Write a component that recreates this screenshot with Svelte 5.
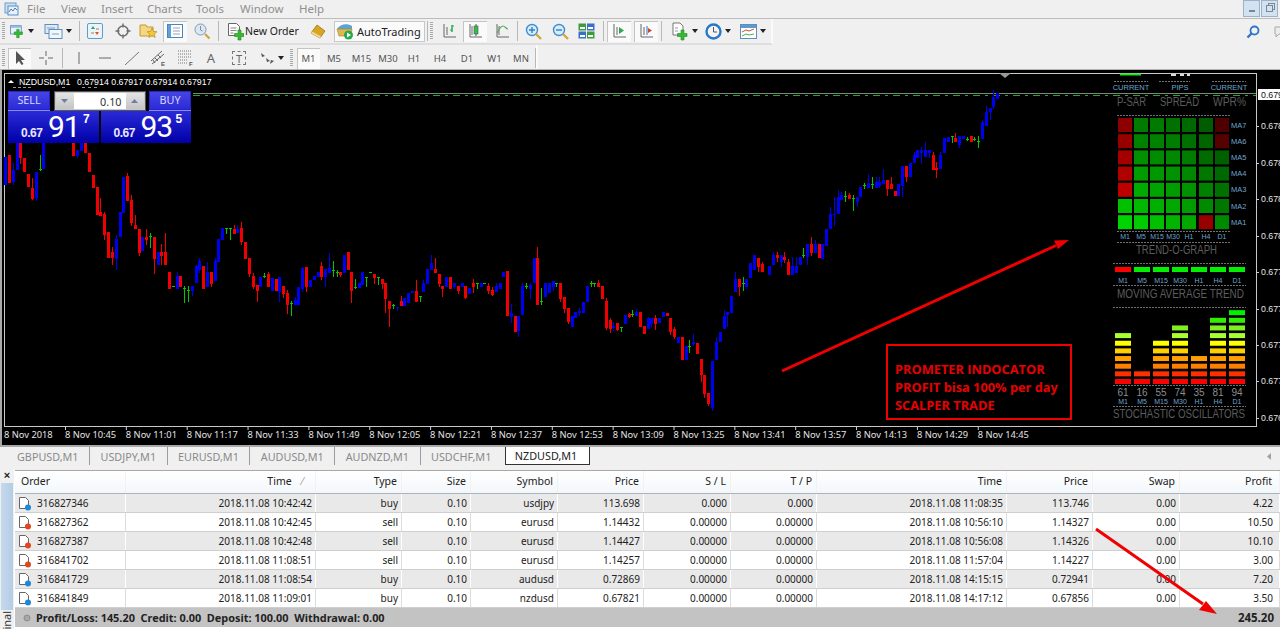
<script>
  const menu = [['File', 27], ['View', 61], ['Insert', 101], ['Charts', 147], ['Tools', 196], ['Window', 240], ['Help', 299]]
  const tabs = ['GBPUSD,M1', 'USDJPY,M1', 'EURUSD,M1', 'AUDUSD,M1', 'AUDNZD,M1', 'USDCHF,M1', 'NZDUSD,M1']
  const periods = ['M1', 'M5', 'M15', 'M30', 'H1', 'H4', 'D1', 'W1', 'MN']
  const periodWidths = [23, 28, 27, 26, 26, 26, 28, 27, 26]

  const times = ['10:45', '11:01', '11:17', '11:33', '11:49', '12:05', '12:21', '12:37', '12:53', '13:09', '13:25', '13:41', '13:57', '14:13', '14:29', '14:45']
  const prices = [[126, '0.678'], [163, '0.678'], [199, '0.678'], [236, '0.678'], [272, '0.677'], [309, '0.677'], [345, '0.677'], [381, '0.677'], [418, '0.676']]

  const columns = [
    { name: 'Order', w: 111 }, { name: 'Time', w: 190 }, { name: 'Type', w: 86 }, { name: 'Size', w: 69 },
    { name: 'Symbol', w: 87 }, { name: 'Price', w: 86 }, { name: 'S / L', w: 87 }, { name: 'T / P', w: 86 },
    { name: 'Time', w: 190 }, { name: 'Price', w: 86 }, { name: 'Swap', w: 87 }, { name: 'Profit', w: 100 }
  ]
  const gridCols = columns.map((c) => c.w + 'px').join(' ')

  const trades = [
    ['316827346', '2018.11.08 10:42:42', 'buy', '0.10', 'usdjpy', '113.698', '0.000', '0.000', '2018.11.08 11:08:35', '113.746', '0.00', '4.22'],
    ['316827362', '2018.11.08 10:42:45', 'sell', '0.10', 'eurusd', '1.14432', '0.00000', '0.00000', '2018.11.08 10:56:10', '1.14327', '0.00', '10.50'],
    ['316827387', '2018.11.08 10:42:48', 'sell', '0.10', 'eurusd', '1.14427', '0.00000', '0.00000', '2018.11.08 10:56:08', '1.14326', '0.00', '10.10'],
    ['316841702', '2018.11.08 11:08:51', 'sell', '0.10', 'eurusd', '1.14257', '0.00000', '0.00000', '2018.11.08 11:57:04', '1.14227', '0.00', '3.00'],
    ['316841729', '2018.11.08 11:08:54', 'buy', '0.10', 'audusd', '0.72869', '0.00000', '0.00000', '2018.11.08 14:15:15', '0.72941', '0.00', '7.20'],
    ['316841849', '2018.11.08 11:09:01', 'buy', '0.10', 'nzdusd', '0.67821', '0.00000', '0.00000', '2018.11.08 14:17:12', '0.67856', '0.00', '3.50']
  ]

  const COLORS = { b: '#0000f0', r: '#f00000', g: '#00c800' }

  // x, colour, body top, body bottom, wick top, wick bottom
  const candles = [
    [5,'b',157,185],[9,'r',155,183],[13,'b',170,182,163,185],[17,'b',140,170],[20,'r',140,158,140,164],[24,'r',158,172],[28,'r',174,187],
    [32,'r',188,199,178,200],[36,'b',172,198,172,201],[40,'g',169,170,155,171],[43,'b',140,169],
    [73,'r',140,156],[77,'b',150,156,150,158],[81,'b',140,151],[85,'r',140,153],[89,'r',153,172],[93,'r',175,188],[97,'r',187,215],[100,'r',212,216,198,216],
    [104,'r',214,235,212,240],[108,'r',232,258],[112,'r',252,258,247,265],[116,'b',239,259,235,270],[120,'b',212,237],[123,'b',177,213],[127,'r',176,201,173,201],
    [131,'r',200,223,195,226],[135,'r',225,229,215,229],[139,'r',229,253,229,256],[142,'b',237,251],[146,'r',237,240,229,245],[150,'g',236,237,233,248],
    [154,'r',237,259,237,274],[158,'b',252,265],[161,'r',252,256,244,265],[165,'r',252,265,233,265],[169,'r',272,289],[173,'g',286,287],[177,'b',276,289,272,289],
    [180,'r',276,287],[184,'g',288,289,286,303],[188,'g',290,291,286,302],[192,'b',286,291,286,296],[196,'b',266,283,265,283],[199,'b',261,270,258,273],[203,'r',266,289],
    [207,'b',272,287,262,287],[211,'r',272,284,272,287],[215,'b',261,281,258,281],[218,'b',239,262],[222,'b',228,240],[226,'g',228,229,228,234],[230,'g',228,229,228,240],
    [234,'r',229,234,225,234],[237,'b',229,233,225,233],[241,'r',228,242,222,245],[245,'r',242,259],[249,'r',258,274,258,277],[253,'r',276,287,273,289],[257,'r',285,291,285,302],
    [260,'b',277,287],[264,'g',276,277,273,278],[268,'r',274,287,272,287],[272,'b',278,291],[276,'r',279,291],[279,'b',277,292,277,302],[283,'r',286,294,286,298],
    [287,'r',293,305,290,314],[291,'g',303,304,301,316],[295,'b',300,305,297,305],[298,'b',287,305],[302,'b',268,289,267,292],[306,'r',267,287,267,292],[310,'b',280,287],
    [314,'b',276,280],[318,'b',272,277],[321,'r',266,277,262,280],[325,'b',269,277,269,287],[329,'b',268,273,253,273],[333,'g',270,271,261,277],[337,'g',272,273,270,277],
    [340,'r',272,275,272,277],[344,'b',255,273],[348,'r',252,270],
    [351,'r',272,291,272,303],[355,'g',287,288,279,289],[359,'b',283,288],[362,'b',272,285],[366,'g',277,278,277,287],[370,'g',272,273],[374,'r',274,278,274,284],
    [378,'g',277,278,277,285],[382,'r',279,284,279,289],[385,'r',283,299,283,313],[389,'r',301,309,301,327],[393,'g',305,306,304,309],[397,'b',307,308,307,311],
    [401,'r',301,306,296,306],[404,'b',298,306],[408,'b',293,303],[412,'b',291,293],[416,'r',291,302,280,302],[420,'g',296,297,296,302],[423,'b',283,292,280,292],
    [427,'b',269,284],[431,'b',263,270,255,270],[435,'r',269,273,258,273],[439,'r',274,284,274,287],[442,'r',286,289,286,297],[446,'b',277,287],[450,'r',277,289],
    [454,'b',283,287,283,289],[458,'r',286,291,286,294],[462,'b',283,287],[465,'r',286,298,286,299],[469,'b',288,294],[473,'r',283,287,279,293],[477,'g',283,284,283,289],
    [481,'b',283,287],[484,'g',283,284],[488,'r',286,291,283,294],[492,'r',290,295,287,296],[496,'b',286,292,283,292],[500,'b',283,289],[503,'b',272,277],[507,'r',271,316],
    [511,'b',313,317,304,323],[515,'r',316,332],[518,'b',316,331,316,337],[522,'b',286,315,283,315],[526,'g',286,287,283,289],[530,'b',285,289,283,299],[534,'b',258,283],
    [537,'r',258,305,247,305],[541,'g',301,302,288,305],[545,'b',283,297],[549,'b',283,293],[553,'b',281,287,281,291],[556,'g',283,284,283,287],[560,'r',283,299,283,302],
    [564,'r',297,309,297,313],[568,'r',308,322,308,324],[572,'b',316,327],[575,'b',312,318],[579,'b',311,313,308,316],[583,'b',302,313],[587,'b',286,302],[591,'g',283,284,281,287],
    [594,'g',283,284,283,287],[598,'r',283,287,280,287],[602,'r',286,299],[606,'r',301,328,298,330],[610,'r',320,329,318,333],[613,'b',326,328,322,331],[617,'r',323,330,323,331],
    [621,'g',327,328,327,332],[625,'b',315,324],[629,'r',314,317,313,318],[632,'g',314,316,310,317],[636,'b',312,316,309,316],[640,'r',312,327],[644,'r',326,334],[648,'b',318,329,317,329],
    [651,'b',318,324,318,328],[655,'r',318,324,315,330],[659,'b',318,323],[663,'b',312,317],[667,'r',313,316],[670,'r',318,332,318,335],[674,'r',329,337,327,339],[678,'b',337,343],
    [682,'r',337,360],[686,'b',346,360],[689,'g',346,347,340,353],[693,'b',342,344,334,346],[697,'r',343,354],[701,'r',359,375,359,382],[704,'r',375,394,375,398],[708,'r',393,404,393,406],
    [712,'b',361,408,361,411],[716,'b',342,360,337,360],[720,'b',332,342],[724,'b',316,329,310,329],[727,'b',312,315,312,327],[731,'b',296,313],[735,'b',279,292,272,292],
    [739,'r',279,287,279,296],[743,'g',283,284,277,291],[746,'b',279,287,279,289],[750,'b',263,278],
    [754,'b',255,270],[758,'r',258,267,258,272],[762,'r',264,272,262,272],[769,'b',266,275],[773,'b',255,265,252,265],[777,'r',255,258,252,262],[781,'b',255,262,255,267],
    [784,'r',257,260,252,263],[788,'r',262,275,259,275],[792,'b',266,275,257,275],[796,'b',266,273,257,273],[800,'b',257,265],[803,'g',255,256,248,258],[807,'b',244,257,244,265],
    [811,'r',244,253,237,256],[815,'b',244,253,240,253],[819,'r',244,258],[822,'b',244,259],[826,'b',229,246],[830,'b',214,229,207,229],[834,'b',214,215,197,226],[838,'b',197,214,190,214],
    [841,'b',195,200,192,200],[845,'g',196,197,191,202],[849,'r',195,199,193,199],[853,'g',198,199,195,211],[857,'b',197,202,197,207],[860,'b',187,197],[864,'g',185,186,183,189],
    [868,'b',183,188,174,188],[872,'g',184,185,177,189],[876,'b',182,188,177,188],[879,'b',182,186,177,188],[883,'b',180,184,169,184],[887,'r',180,189,180,196],[891,'r',184,189,177,189],
    [895,'r',191,196],[898,'b',184,196],[902,'b',166,186,166,197],[906,'r',166,177,166,182],[910,'b',163,177],[914,'b',155,163,152,163],[917,'b',150,158],[921,'b',150,153,147,164],
    [925,'b',150,157,142,157],[929,'b',150,153,150,158],[933,'r',155,170,152,170],[936,'r',168,170,162,178],[940,'b',155,169,152,169],[944,'b',138,153],[948,'b',137,142],[952,'g',136,137,136,143],
    [955,'r',138,142,133,142],[959,'b',136,145,136,148],[963,'b',136,139],[967,'g',139,140,137,141],[971,'r',136,142],[974,'g',139,140,137,141],[978,'g',141,142,136,148],
    [982,'b',122,139,120,139],[986,'b',112,126,106,126],[990,'b',108,112,108,120],[993,'b',97,107,90,109],[997,'b',93,99]
  ]

  // trend grid, rows MA7..MA1, columns M1..D1
  const trendGrid = [
    ['#8e0000', '#007a00', '#007a00', '#007000', '#006800', '#005c00', '#4e0000'],
    ['#980000', '#008200', '#008200', '#007c00', '#007000', '#006400', '#560000'],
    ['#a40000', '#009000', '#008c00', '#008800', '#007c00', '#006c00', '#006000'],
    ['#b00000', '#009c00', '#009800', '#009200', '#008800', '#007800', '#006800'],
    ['#bc0000', '#00aa00', '#00a400', '#009c00', '#009200', '#008200', '#007000'],
    ['#00c000', '#00b800', '#00b000', '#00a800', '#009c00', '#008a00', '#007800'],
    ['#00d400', '#00cc00', '#00c000', '#00b400', '#00a800', '#980000', '#008800']
  ]
  const maLabels = ['MA7', 'MA6', 'MA5', 'MA4', 'MA3', 'MA2', 'MA1']
  const tf = ['M1', 'M5', 'M15', 'M30', 'H1', 'H4', 'D1']
  const gridX = [1118, 1134, 1150, 1166, 1182, 1199, 1215]
  const barX = [1115, 1134, 1153, 1172, 1191, 1210, 1229]
  const maTrend = ['#ff0000', '#00f000', '#00f000', '#00f000', '#00f000', '#00f000', '#00f000']
  const stochColors = ['#ff0000', '#ff3000', '#ff8000', '#ffa000', '#ffd000', '#ffff00', '#aaff30', '#80f020', '#30f000', '#00f000']
  const stoch = [[61, 7], [16, 2], [55, 6], [74, 8], [35, 4], [81, 9], [94, 10]]
  const dashes = [
    [1114, 1148, 81], [1159, 1190, 81], [1212, 1246, 81], [1117, 1230, 115], [1117, 1230, 231], [1117, 1230, 242],
    [1113, 1246, 263], [1113, 1246, 285], [1113, 1246, 307], [1113, 1246, 385], [1113, 1246, 406]
  ]
  // label, left edge, width, baseline
  const captions = [
    ['P-SAR', 1117, 29, 106], ['SPREAD', 1160, 39, 106], ['WPR%', 1213, 33, 106], ['TREND-O-GRAPH', 1136, 81, 254],
    ['MOVING AVERAGE TREND', 1117, 127, 298], ['STOCHASTIC OSCILLATORS', 1113, 132, 418]
  ]
</script>

<div class="app">
  <nav class="menu">
    <svg class="appicon" width="15" height="15" viewBox="0 0 15 15">
      <rect x="1" y="2" width="11" height="10" fill="#cfe0f2" stroke="#6f9cc9" />
      <rect x="4" y="5" width="10" height="9" fill="#e6f0fa" stroke="#5a8fc4" />
      <path d="M5 11l2-3 2 2 2-3 2 2" fill="none" stroke="#4a7db5" />
    </svg>
    {#each menu as [label, x]}
      <span class="menuitem" style="left:{x}px">{label}</span>
    {/each}
    <div class="winbtns">
      <span class="winbtn"><i class="min"></i></span>
      <span class="winbtn"><i class="rest"></i></span>
    </div>
  </nav>

  <div class="toolbar row1">
    <div class="tools">
      <span class="grip"></span>
      <span class="tool" style="width:24px">
        <svg width="18" height="17" viewBox="0 0 18 17"><rect x=".5" y="1.5" width="13" height="10" fill="#e8f1fb" stroke="#5e8ebe" /><rect x="1" y="2" width="12" height="2" fill="#8fb8de" /><path d="M8 6v3H5v3h3v4h3v-4h4V9h-4V6z" fill="#35b935" stroke="#1f8a1f" stroke-width=".6" /></svg>
        <b class="caret"></b>
      </span>
      <span class="tool" style="width:32px;margin-left:8px">
        <svg width="19" height="17" viewBox="0 0 19 17"><rect x="1" y="1.5" width="13" height="9" fill="#dfeaf7" stroke="#5e8ebe" /><rect x="5" y="6.5" width="13" height="9" fill="#f2f7fc" stroke="#5e8ebe" /><path d="M3 5h8M8 11h7" stroke="#7aa0c8" /></svg>
        <b class="caret"></b>
      </span>
      <span class="sep" style="margin:0 7px 0 5px"></span>
      <span class="tool" style="width:16px">
        <svg width="16" height="16" viewBox="0 0 16 16"><rect x=".5" y=".5" width="15" height="15" rx="1.5" fill="#eaf4fb" stroke="#5b9ec9" /><path d="M4 6l2-3 2 3z" fill="#2fa84f" /><path d="M8 9l2 3 2-3z" fill="#d9572b" /><path d="M4 10h3M9 6h3" stroke="#c97b2b" /></svg>
      </span>
      <span class="tool" style="width:16px;margin-left:12px">
        <svg width="16" height="16" viewBox="0 0 16 16"><circle cx="8" cy="8" r="5" fill="none" stroke="#6e6e6e" stroke-width="1.6" /><path d="M8 .5v4M8 11.5v4M.5 8h4M11.5 8h4" stroke="#6e6e6e" stroke-width="1.4" /></svg>
      </span>
      <span class="tool" style="width:19px;margin-left:8px">
        <svg width="19" height="18" viewBox="0 0 19 18"><path d="M1 3h6l1 2h6v9H1z" fill="#f4d77f" stroke="#c09a3a" /><path d="M13 6l1.5 3.4 3.5.3-2.7 2.3.9 3.5-3.2-1.900-3.2 1.900.9-3.500-2.700-2.300 3.500-.3z" fill="#f2c83a" stroke="#b98f20" stroke-width=".7" /></svg>
      </span>
      <span class="tool pressed" style="width:24px;margin-left:5px">
        <svg width="16" height="14" viewBox="0 0 16 14"><rect x=".5" y=".5" width="15" height="13" fill="#fff" stroke="#4a86bd" /><rect x="1" y="1" width="3" height="12" fill="#5fa2d8" /><path d="M6 4h7M6 7h7M6 10h7" stroke="#8fa8c0" /></svg>
      </span>
      <span class="tool" style="width:18px;margin-left:6px">
        <svg width="18" height="18" viewBox="0 0 18 18"><circle cx="7.5" cy="7.5" r="5.5" fill="#dbe7f3" stroke="#8499b0" /><path d="M7.5 4v4l2 1" fill="none" stroke="#7a8ea5" /><path d="M12 12l4.500 4.500" stroke="#c9a23b" stroke-width="2" /></svg>
      </span>
      <span class="sep" style="margin:0 8px 0 7px"></span>
      <span class="tool" style="width:17px">
        <svg width="17" height="19" viewBox="0 0 17 19"><path d="M1.500 1.500h8l3 3v9h-11z" fill="#fff" stroke="#666" /><path d="M3.500 6h6M3.500 8.500h6M3.500 11h3" stroke="#888" /><path d="M11 8v3.500H7.500v3H11V18h3v-3.500h3v-3h-3V8z" fill="#35b935" stroke="#1f8a1f" stroke-width=".6" /></svg>
      </span>
      <span class="textbtn" style="width:54px;margin-left:1px">New Order</span>
      <span class="tool" style="width:16px;margin-left:11px">
        <svg width="16" height="15" viewBox="0 0 16 15"><path d="M1 9l6-8 8 6-5 7z" fill="#d9a520" stroke="#8f6a14" stroke-width=".7" /><path d="M1 9l9 5 1-1.500-9-5z" fill="#f1dda0" /></svg>
      </span>
      <span class="autotrading">
        <svg width="18" height="18" viewBox="0 0 18 18"><path d="M1 7c3-5 10-6 15-3v3H1z" fill="#56a5d6" /><path d="M1 7h15l-1 7H3z" fill="#e3b64a" stroke="#a5812c" stroke-width=".6" /><circle cx="12.5" cy="13" r="4.500" fill="#27a84a" /><path d="M11 10.500l4 2.500-4 2.500z" fill="#fff" /></svg>
        <span>AutoTrading</span>
      </span>
      <span class="sep" style="margin:0 2px"></span>
      <span class="grip" style="margin:0 9px 0 0"></span>
      <span class="tool" style="width:14px">
        <svg width="14" height="16" viewBox="0 0 14 16"><path d="M2 1v13h12M5 4v8" fill="none" stroke="#666" /><path d="M10 2v7" stroke="#2fa84f" stroke-width="1.500" /><path d="M8 7h2M10 3h2" stroke="#2fa84f" /></svg>
      </span>
      <span class="tool pressed" style="width:24px;margin-left:7px">
        <svg width="14" height="16" viewBox="0 0 14 16"><path d="M2 1v13h12M4 3v9" fill="none" stroke="#666" /><rect x="6" y="3" width="4" height="8" fill="#2fbd4f" stroke="#555" stroke-width=".6" /><path d="M8 1v2M8 11v2" stroke="#555" /></svg>
      </span>
      <span class="tool" style="width:14px;margin-left:8px">
        <svg width="14" height="16" viewBox="0 0 14 16"><path d="M2 1v13h12M4 3v9" fill="none" stroke="#666" /><path d="M2 10c2-4 4-7 6-7s3 3 5 3" fill="none" stroke="#4caf50" stroke-width="1.100" /></svg>
      </span>
      <span class="sep" style="margin:0 7px 0 8px"></span>
      <span class="tool" style="width:17px">
        <svg width="17" height="17" viewBox="0 0 17 17"><circle cx="7" cy="7" r="5.500" fill="#d8ecfb" stroke="#3f8ed0" stroke-width="1.400" /><path d="M4 7h6M7 4v6" stroke="#2f7fc4" stroke-width="1.400" /><path d="M11 11l5 5" stroke="#d1a93b" stroke-width="2.400" /></svg>
      </span>
      <span class="tool" style="width:17px;margin-left:10px">
        <svg width="17" height="17" viewBox="0 0 17 17"><circle cx="7" cy="7" r="5.500" fill="#d8ecfb" stroke="#3f8ed0" stroke-width="1.400" /><path d="M4 7h6" stroke="#2f7fc4" stroke-width="1.400" /><path d="M11 11l5 5" stroke="#d1a93b" stroke-width="2.400" /></svg>
      </span>
      <span class="tool" style="width:17px;margin-left:9px">
        <svg width="17" height="16" viewBox="0 0 17 16"><rect x=".5" y=".5" width="7.500" height="7" fill="#3d9a3d" /><rect x="9" y=".5" width="7.500" height="7" fill="#3a6fc9" /><rect x=".5" y="8.500" width="7.500" height="7" fill="#3a6fc9" /><rect x="9" y="8.500" width="7.500" height="7" fill="#3d9a3d" /><path d="M2 5h5M10 5h5M2 13h5M10 13h5" stroke="#fff" stroke-width="2" /></svg>
      </span>
      <span class="sep" style="margin:0 3px 0 8px"></span>
      <span class="tool pressed" style="width:24px">
        <svg width="14" height="16" viewBox="0 0 14 16"><path d="M2 1v13h12M5 4v8" fill="none" stroke="#666" /><path d="M7 4l5 3.500L7 11z" fill="#2fa84f" /></svg>
      </span>
      <span class="tool pressed" style="width:24px;margin-left:3px">
        <svg width="14" height="16" viewBox="0 0 14 16"><path d="M2 1v13h12M5 4v8" fill="none" stroke="#666" /><path d="M8 3v9" stroke="#3a6fc9" /><path d="M13 7.500l-4-2.500v5z" fill="#c8442b" /></svg>
      </span>
      <span class="sep" style="margin:0 9px 0 3px"></span>
      <span class="tool" style="width:27px">
        <svg width="17" height="19" viewBox="0 0 17 19"><path d="M1 1h7l3 3v9H1z" fill="#fff" stroke="#777" /><path d="M3 6h3M3 9h3" stroke="#999" /><path d="M9 8v3.500H5.500v3H9V18h3v-3.500h3v-3h-3V8z" fill="#35b935" stroke="#1f8a1f" stroke-width=".6" /></svg>
        <b class="caret"></b>
      </span>
      <span class="tool" style="width:27px;margin-left:6px">
        <svg width="17" height="17" viewBox="0 0 17 17"><circle cx="8.500" cy="8.500" r="7" fill="#f4f4f4" stroke="#2878c8" stroke-width="2.400" /><path d="M8.500 4v5h3.500" fill="none" stroke="#555" /></svg>
        <b class="caret"></b>
      </span>
      <span class="tool" style="width:26px;margin-left:9px">
        <svg width="17" height="15" viewBox="0 0 17 15"><rect x=".5" y=".5" width="16" height="14" fill="#fff" stroke="#5e8ebe" /><rect x="1" y="1" width="15" height="3" fill="#5e9ad2" /><path d="M2 8l4-2 3 1 5-2" fill="none" stroke="#c8553a" /><path d="M2 12l4-2 3 1 5-1" fill="none" stroke="#4caf50" /></svg>
        <b class="caret"></b>
      </span>
    </div>
    <div class="search">
      <svg width="14" height="14" viewBox="0 0 14 14"><circle cx="8.500" cy="5.500" r="4" fill="none" stroke="#2f74c9" stroke-width="1.800" /><path d="M5.500 8.500L1.500 12.500" stroke="#2f74c9" stroke-width="2.400" /></svg>
      <svg width="14" height="12" viewBox="0 0 14 12"><path d="M2 1h12v7H6l-3 3V8H2z" fill="#ececec" stroke="#a8a8a8" /></svg>
    </div>
  </div>

  <div class="toolbar row2">
    <div class="tools">
      <span class="grip"></span>
      <span class="tool pressed" style="width:23px">
        <svg width="10" height="14" viewBox="0 0 10 14"><path d="M1 0v13l3-3 2.500 4 2-1-2.500-4H10z" fill="#555" /></svg>
      </span>
      <span class="tool" style="width:14px;margin-left:8px">
        <svg width="14" height="14" viewBox="0 0 14 14"><path d="M7 0v5M7 9v5M0 7h5M9 7h5" stroke="#666" /></svg>
      </span>
      <span class="sep" style="margin:0 10px 0 9px"></span>
      <span class="tool" style="width:12px"><svg width="2" height="12" viewBox="0 0 2 12"><path d="M1 0v12" stroke="#666" /></svg></span>
      <span class="tool" style="width:12px;margin-left:14px"><svg width="12" height="2" viewBox="0 0 12 2"><path d="M0 1h12" stroke="#666" /></svg></span>
      <span class="tool" style="width:14px;margin-left:14px"><svg width="14" height="13" viewBox="0 0 14 13"><path d="M0 13L14 0" stroke="#777" /></svg></span>
      <span class="tool" style="width:16px;margin-left:12px">
        <svg width="16" height="16" viewBox="0 0 16 16"><path d="M0 11L11 1M1 14L13 4M4 8l3 3M7 5l3 3M2 10l2 3" stroke="#666" /><text x="10" y="16" class="micro">E</text></svg>
      </span>
      <span class="tool" style="width:16px;margin-left:11px">
        <svg width="16" height="16" viewBox="0 0 16 16"><path d="M0 1h14M0 4h14M0 7h14M0 10h10M0 13h10" stroke="#777" stroke-dasharray="1 1" /><text x="11" y="16" class="micro">F</text></svg>
      </span>
      <span class="glyph" style="width:10px;margin-left:12px">A</span>
      <span class="tool tbox" style="width:14px;margin-left:16px">T</span>
      <span class="tool" style="width:25px;margin-left:13px">
        <svg width="15" height="13" viewBox="0 0 15 13"><path d="M1 1l4 3-3 1zM6 6l4 3-3 1z" fill="#555" /><path d="M10 12l4-3-3-1z" fill="#555" /></svg>
        <b class="caret"></b>
      </span>
      <span class="grip" style="margin:0 4px 0 6px"></span>
      {#each periods as p, i}
        <span class="period" class:pressed={i === 0} style="width:{periodWidths[i]}px">{p}</span>
      {/each}
      <span class="sep" style="margin-left:1px"></span>
    </div>
  </div>

  <div class="chart">
    <svg width="1280" height="375" viewBox="0 70 1280 375" class="canvas">
      <rect x="4.500" y="73.500" width="1252" height="353" fill="none" stroke="#c8c8c8" />

      <line x1="193" x2="1256" y1="93.500" y2="93.500" stroke="#808080" />
      <line x1="193" x2="1256" y1="95.500" y2="95.500" stroke="#22a822" stroke-dasharray="7 5 3 5" />

      {#each candles as [x, c, top, bottom, wt, wb]}
        {#if wt !== undefined}
          <rect x={x} y={wt} width="1" height={wb - wt} fill={COLORS[c]} />
        {/if}
        {#if c === 'g'}
          <rect x={x - 1} y={top} width="3" height="1" fill={COLORS[c]} />
        {:else}
          <rect x={x - 1} y={top} width="3" height={bottom - top} fill={COLORS[c]} />
        {/if}
      {/each}

      <path d="M8 83l3-3 3 3z" fill="#fff" />
      <text x="19" y="85" class="head">NZDUSD,M1</text>
      <text x="77" y="85" class="head">0.67914 0.67917 0.67914 0.67917</text>
      <line x1="13" x2="33" y1="87.500" y2="87.500" stroke="#999" stroke-dasharray="3 2" />
      <line x1="62" x2="65" y1="87.500" y2="87.500" stroke="#999" />
      <line x1="82" x2="97" y1="87.500" y2="87.500" stroke="#999" stroke-dasharray="3 3" />

      <path d="M999 73l6 5 6-5z" fill="#9a9a9a" />

      <!-- right-hand indicator stack -->
      <rect x="1120" y="73.500" width="21" height="2" fill="#20e020" />
      <rect x="1171" y="74" width="5" height="2" fill="#ddd" />
      <rect x="1180" y="74" width="4" height="2" fill="#ddd" />
      <rect x="1187" y="74" width="3" height="2" fill="#ddd" />
      {#each dashes as [x1, x2, y]}
        <line {x1} {x2} y1={y + 0.5} y2={y + 0.5} stroke="#707070" stroke-dasharray="2 1" />
      {/each}
      <text x="1131" y="90" class="tiny" text-anchor="middle">CURRENT</text>
      <text x="1180" y="90" class="tiny" text-anchor="middle">PIPS</text>
      <text x="1229" y="90" class="tiny" text-anchor="middle">CURRENT</text>
      {#each captions as [label, x, w, y]}
        <text {x} {y} class="dim" textLength={w} lengthAdjust="spacingAndGlyphs">{label}</text>
      {/each}

      {#each trendGrid as row, j}
        {#each row as color, i}
          <rect x={gridX[i]} y={118 + j * 16.2} width="14" height="14" fill={color} />
        {/each}
        <text x="1231" y={127.5 + j * 16.2} class="tiny">{maLabels[j]}</text>
      {/each}
      {#each tf as label, i}
        <text x={gridX[i] + 7} y="239" class="tiny short" text-anchor="middle">{label}</text>
        <rect x={barX[i]} y="267" width="16" height="5" fill={maTrend[i]} />
        <text x={barX[i] + 8} y="283" class="tiny short" text-anchor="middle">{label}</text>
        <text x={barX[i] + 8} y="404" class="tiny short" text-anchor="middle">{label}</text>
      {/each}

      {#each stoch as [value, count], i}
        {#each stochColors.slice(0, count) as color, k}
          <rect x={barX[i]} y={379 - k * 7.65} width="16" height="5" fill={color} />
        {/each}
        <text x={barX[i] + 8} y="396" class="num" text-anchor="middle">{value}</text>
      {/each}

      <!-- price scale -->
      {#each prices as [y, label]}
        <line x1="1256" x2="1259" y1={y + 0.5} y2={y + 0.5} stroke="#d0d0d0" />
        <text x="1261" y={y + 3} class="price">{label}</text>
      {/each}
      <rect x="1258" y="89" width="24" height="11" fill="#fff" />
      <text x="1261" y="97.500" class="price dark">0.679</text>

      <!-- time scale -->
      <text x="4" y="438" class="axis">8 Nov 2018</text>
      {#each times as t, i}
        <line x1={65.5 + i * 60.85} x2={65.5 + i * 60.85} y1="426" y2="430" stroke="#d0d0d0" />
        <text x={65 + i * 60.85} y="438" class="axis">8 Nov {t}</text>
      {/each}

      <!-- annotation -->
      <rect x="887" y="345" width="184" height="74" fill="#000" stroke="#f00000" stroke-width="2" />
      <text x="895" y="374" class="note">PROMETER INDOCATOR</text>
      <text x="895" y="392" class="note">PROFIT bisa 100% per day</text>
      <text x="895" y="410" class="note">SCALPER TRADE</text>
      <path d="M782 371L1056 245.500" stroke="#f00000" stroke-width="3" />
      <path d="M1069 240l-15 0.500 4 8.500z" fill="#f00000" />
    </svg>

    <div class="trade">
      <div class="traderow">
        <button type="button" class="side">SELL</button>
        <div class="lot">
          <span class="spin"><svg width="7" height="4" viewBox="0 0 7 4"><path d="M0 0h7L3.500 4z" fill="#6b7fa8" /></svg></span>
          <span class="lotvalue">0.10</span>
          <span class="spin"><svg width="7" height="4" viewBox="0 0 7 4"><path d="M0 4h7L3.500 0z" fill="#6b7fa8" /></svg></span>
        </div>
        <button type="button" class="side">BUY</button>
      </div>
      <div class="traderow">
        <div class="quote">
          <span class="small">0.67</span><span class="big">91</span><sup>7</sup>
        </div>
        <div class="quote">
          <span class="small">0.67</span><span class="big">93</span><sup>5</sup>
        </div>
      </div>
    </div>
  </div>

  <div class="tabs">
    {#each tabs as tab, i}
      <span class="tab" class:active={i === 6} class:last={i >= 5}>{tab}</span>
    {/each}
    <svg class="tabarrow" width="5" height="7" viewBox="0 0 5 7"><path d="M4 0v7L0 3.500z" fill="#a0a0a0" /></svg>
  </div>

  <div class="terminal">
    <aside class="strip">
      <span class="close">×</span>
      <span class="stripbar"></span>
      <span class="striplabel"><span>Terminal</span></span>
    </aside>
    <div class="table">
      <div class="thead" style="grid-template-columns:{gridCols}">
        {#each columns as col, i}
          <span class="th" class:left={i === 0}>
            {col.name}{#if i === 1}<em>⁄</em>{/if}
          </span>
        {/each}
      </div>
      {#each trades as row, r}
        <div class="tr" class:odd={r % 2 === 0} style="grid-template-columns:{gridCols}">
          {#each row as cell, i}
            {#if i === 0}
              <span class="td order">
                <svg width="14" height="15" viewBox="0 0 14 15">
                  <path d="M1.500 1.500h6l3 3v8h-9z" fill="#fff" stroke="#666" />
                  <circle cx="10" cy="11.500" r="3" fill={row[2] === 'buy' ? '#1e88d8' : '#e0481c'} />
                </svg>
                {cell}
              </span>
            {:else}
              <span class="td">{cell}</span>
            {/if}
          {/each}
        </div>
      {/each}
      <div class="total">
        <svg width="8" height="8" viewBox="0 0 8 8"><circle cx="4" cy="4" r="3" fill="#a8a8a8" stroke="#8c8c8c" /></svg>
        <span class="summary">Profit/Loss: 145.20&nbsp; Credit: 0.00&nbsp; Deposit: 100.00&nbsp; Withdrawal: 0.00</span>
        <span class="sum">245.20</span>
      </div>
      <svg class="redarrow" width="140" height="100" viewBox="0 0 140 100">
        <path d="M1 1L108 76" stroke="#f00000" stroke-width="3" />
        <path d="M122 86l-18-4 7-9z" fill="#f00000" />
      </svg>
    </div>
  </div>
</div>

<style>
  :global(body) {
    margin: 0;
    background: #f0f0f0;
    overflow: hidden;
  }

  .app {
    width: 1280px;
    height: 629px;
    overflow: hidden;
    font-family: 'Noto Sans', 'Liberation Sans', sans-serif;
    font-size: 10px;
    color: #333;
  }

  .menu {
    position: relative;
    height: 18px;
    border-bottom: 1px solid #bdbdbd;
    background: #f0f0f0;
  }

  .appicon {
    position: absolute;
    left: 4px;
    top: 1px;
  }

  .menuitem {
    position: absolute;
    top: 1px;
    font-size: 11.5px;
    line-height: 16px;
    color: #8f8f8f;
  }

  .winbtns {
    position: absolute;
    right: 2px;
    top: 0;
    display: flex;
    gap: 1px;
  }

  .winbtn {
    width: 15px;
    height: 15px;
    border: 1px solid #9db2c9;
    background: #d3e2f1;
    display: flex;
    align-items: center;
    justify-content: center;
  }

  .min {
    width: 6px;
    height: 2px;
    margin-top: 4px;
    background: #7a8694;
  }

  .rest {
    width: 5px;
    height: 5px;
    border: 1px solid #7a8694;
    box-shadow: 2px -2px 0 -1px #d3e2f1, 2px -2px 0 0 #7a8694;
  }

  .toolbar {
    display: flex;
    align-items: stretch;
    background: #f0f0f0;
  }

  .row1 {
    height: 26px;
    justify-content: space-between;
  }

  .row2 {
    height: 25px;
    border-bottom: 1px solid #b4b4b4;
    box-sizing: border-box;
  }

  .row2 .tools {
    padding-top: 2px;
  }

  .tools {
    display: flex;
    align-items: center;
    padding-left: 2px;
    border-right: 2px solid #fafafa;
  }

  .row1 .tools {
    width: 769px;
    border-bottom: 2px solid #dedede;
  }

  .grip {
    width: 3px;
    height: 18px;
    margin-right: 3px;
    background: repeating-linear-gradient(#a8a8a8 0 1px, #f0f0f0 1px 2px);
  }

  .row1 .tools > .grip:first-child {
    margin-right: 5px;
  }

  .sep {
    width: 1px;
    height: 20px;
    background: #b8b8b8;
    flex: none;
  }

  .tool {
    display: flex;
    align-items: center;
    justify-content: center;
    height: 21px;
    flex: none;
    gap: 3px;
  }

  .pressed {
    background: #fafafa;
    box-shadow: inset 1px 1px 0 #c4c4c4;
  }

  .caret {
    width: 0;
    height: 0;
    border: 3px solid transparent;
    border-top: 4px solid #222;
    border-bottom: 0;
  }

  .textbtn {
    font-size: 10.5px;
    color: #222;
    flex: none;
    white-space: nowrap;
  }

  .autotrading {
    display: flex;
    align-items: center;
    gap: 3px;
    width: 91px;
    height: 21px;
    margin-left: 8px;
    padding-left: 2px;
    box-sizing: border-box;
    background: #fafafa;
    box-shadow: inset 0 0 0 1px #c8c8c8;
    font-size: 11px;
    color: #222;
  }

  .search {
    display: flex;
    align-items: center;
    gap: 13px;
    margin-right: -7px;
    width: 41px;
  }

  .glyph {
    flex: none;
    text-align: center;
    font-size: 13px;
    color: #666;
  }

  .tbox {
    height: 14px;
    border: 1px dashed #777;
    box-sizing: border-box;
    font-size: 11px;
    color: #666;
  }

  .period {
    flex: none;
    height: 21px;
    display: flex;
    align-items: center;
    justify-content: center;
    color: #555;
    font-size: 9.5px;
  }

  .micro {
    font: bold 6px 'Liberation Sans', sans-serif;
    fill: #555;
  }

  .chart {
    position: relative;
    height: 375px;
    background: #000;
    box-shadow: inset 2px 0 0 #a8a8a8;
  }

  .canvas {
    display: block;
  }

  .head {
    font: 8.8px 'Liberation Sans', sans-serif;
    fill: #fff;
  }

  .tiny {
    font: 7.5px 'Liberation Sans', sans-serif;
    fill: #6da5cf;
  }

  .tiny.short {
    font-size: 7px;
  }

  .dim {
    font: 12px 'Liberation Sans', sans-serif;
    fill: #5c5c5c;
  }

  .num {
    font: 10px 'Liberation Sans', sans-serif;
    fill: #8c8c8c;
  }

  .axis {
    font: 9.3px 'Noto Sans', sans-serif;
    fill: #e4e4e4;
  }

  .price {
    font: 8.8px 'Liberation Sans', sans-serif;
    fill: #e4e4e4;
  }

  .price.dark {
    fill: #111;
  }

  .note {
    font: bold 12.8px 'Open Sans', sans-serif;
    fill: #e80000;
  }

  .trade {
    position: absolute;
    left: 8px;
    top: 21px;
    width: 183px;
    font-family: 'Liberation Sans', sans-serif;
  }

  .traderow {
    display: flex;
    justify-content: space-between;
  }

  .side {
    width: 42px;
    height: 20px;
    padding: 0 0 2px;
    border: 0;
    border-bottom: 1px solid #8a8aee;
    background: linear-gradient(#4646e6, #2a2ad6);
    box-shadow: inset 0 0 0 1px #2424c8;
    color: #d8d8ff;
    font: 10.8px 'Noto Sans', sans-serif;
  }

  .lot {
    width: 92px;
    height: 20px;
    display: flex;
    align-items: center;
    box-sizing: border-box;
    border: 1px solid #555;
    background: #fff;
    box-shadow: inset 0 0 0 1px #c8c8c8;
  }

  .spin {
    width: 18px;
    height: 16px;
    margin: 0 1px;
    flex: none;
    display: flex;
    align-items: center;
    justify-content: center;
    background: linear-gradient(#e4e4e4, #c4c4c4);
  }

  .lotvalue {
    flex: 1;
    text-align: right;
    padding-right: 3px;
    font: 10.8px 'Noto Sans', sans-serif;
    color: #333;
  }

  .quote {
    position: relative;
    width: 90.5px;
    height: 32px;
    display: flex;
    align-items: baseline;
    padding-left: 13px;
    box-sizing: border-box;
    background: linear-gradient(#2a2ad8, #0000a8);
    color: #fff;
    line-height: 32px;
  }

  .small {
    width: 27px;
    flex: none;
    font-size: 12px;
    letter-spacing: -0.5px;
    font-weight: bold;
    color: #e8e8ff;
  }

  .big {
    font: 30px/32px 'Roboto', sans-serif;
    letter-spacing: -1px;
  }

  .quote sup {
    position: absolute;
    left: 75px;
    top: -8px;
    font-size: 12px;
    font-weight: bold;
  }

  .tabs {
    position: relative;
    height: 25px;
    box-sizing: border-box;
    padding-left: 6.5px;
    display: flex;
    align-items: flex-start;
    background: #f0f0f0;
    border-top: 2px solid #a8a8a8;
  }

  .tab {
    display: flex;
    align-items: center;
    padding: 0 10.5px;
    height: 18px;
    color: #8a8a8a;
    font-size: 10.8px;
    border-right: 1px solid #9c9c9c;
    white-space: nowrap;
  }

  .tab.last {
    border-right: 0;
  }

  .tab.active {
    color: #222;
    background: #fff;
    border: 1px solid #333;
    border-top: 0;
    box-sizing: border-box;
    width: 85px;
    margin-left: 3px;
    padding: 0 0 0 9px;
  }

  .tabarrow {
    position: absolute;
    right: 8px;
    top: 6px;
  }

  .terminal {
    display: flex;
    height: 159px;
    background: #fff;
  }

  .strip {
    width: 14px;
    margin-right: 1px;
    flex: none;
    display: flex;
    flex-direction: column;
    background: #f0f0f0;
  }

  .close {
    height: 13px;
    text-align: center;
    font: bold 11px/11px 'Liberation Sans', sans-serif;
    color: #222;
  }

  .stripbar {
    height: 127px;
    margin: 0 1px;
    background: linear-gradient(90deg, #c6d9ec, #b3cde6);
  }

  .striplabel {
    height: 19px;
    overflow: hidden;
  }

  .striplabel span {
    display: block;
    writing-mode: vertical-rl;
    transform: rotate(180deg);
    font-size: 11px;
    line-height: 14px;
    height: 46px;
    text-align: left;
    color: #333;
  }

  .table {
    position: relative;
    flex: 1;
    border-top: 1px solid #a8a8a8;
  }

  .thead {
    display: grid;
    height: 23px;
    box-sizing: border-box;
    background: linear-gradient(#fff, #f3f7fb);
    border-bottom: 1px solid #a9b4bd;
  }

  .th {
    display: block;
    padding-right: 4px;
    text-align: right;
    line-height: 21px;
    font-size: 10.5px;
    border-right: 1px solid #f2f2f2;
    color: #222;
    white-space: nowrap;
  }

  .th.left {
    text-align: left;
    padding-left: 6px;
  }

  .th:last-child {
    padding-right: 7px;
  }

  .th em {
    font-style: normal;
    color: #999;
    margin-left: 10px;
    margin-right: 8px;
  }

  .tr {
    display: grid;
    height: 19px;
    box-sizing: border-box;
    background: #fff;
    border-bottom: 1px solid #cfcfcf;
  }

  .tr.odd {
    background: #e9e9e9;
  }

  .td {
    padding-right: 3px;
    text-align: right;
    line-height: 18px;
    border-right: 1px solid #dcdcdc;
    white-space: nowrap;
    color: #222;
    overflow: hidden;
  }

  .td:last-child {
    padding-right: 6px;
  }

  .odd .td {
    border-right-color: #fff;
  }

  .td.order {
    display: flex;
    align-items: center;
    gap: 5px;
    padding-left: 3px;
    text-align: left;
  }

  .total {
    display: flex;
    align-items: center;
    height: 19px;
    background: #c3c3c3;
    font-weight: bold;
    color: #222;
    padding: 0 6px 0 8px;
  }

  .summary {
    margin-left: 5px;
    font-size: 10.9px;
  }

  .sum {
    margin-left: auto;
    font-size: 11.5px;
  }

  .redarrow {
    position: absolute;
    left: 1080px;
    top: 57px;
  }
</style>
